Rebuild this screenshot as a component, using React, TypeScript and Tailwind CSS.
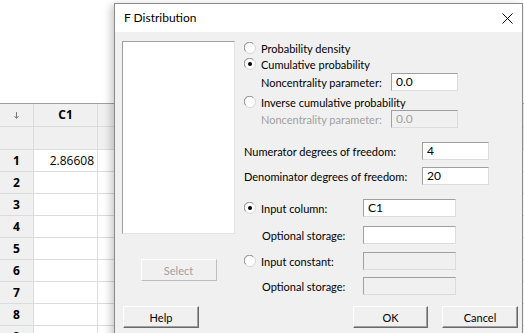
import React from 'react';

const ui = "font-['Lato',sans-serif] text-[11px] leading-none text-black whitespace-nowrap";

function Radio({ checked }: { checked?: boolean }) {
  return (
    <svg width="12" height="12" viewBox="0 0 12 12" className="shrink-0">
      <circle cx="6" cy="6" r="5.5" fill="#ffffff" stroke="#d4d4d4" />
      <path d="M1.7 9.2 A5.2 5.2 0 0 1 9.2 1.7" fill="none" stroke="#8c8c8c" />
      {checked && <circle cx="6" cy="6" r="2" fill="#000000" />}
    </svg>
  );
}

function Field({ value, disabled, className }: { value?: string; disabled?: boolean; className: string }) {
  return (
    <div
      className={`h-[18px] shrink-0 flex items-center px-[4px] text-[12px] border border-t-[#a0a0a0] border-l-[#a0a0a0] border-r-[#dcdcdc] border-b-[#dcdcdc] ${
        disabled ? 'bg-[#f0f0f0] text-[#a0a0a0]' : 'bg-white text-black'
      } ${className}`}
    >
      {value}
    </div>
  );
}

function Btn({ label, disabled, className }: { label: string; disabled?: boolean; className: string }) {
  return (
    <div
      className={`h-[22px] flex items-center justify-center bg-[#f0f0f0] border ${
        disabled
          ? 'border-t-white border-l-white border-r-[#bdbdbd] border-b-[#bdbdbd] text-[#a0a0a0]'
          : 'border-t-white border-l-white border-r-[#696969] border-b-[#696969] shadow-[inset_-1px_-1px_0_#a0a0a0] text-black'
      } ${className}`}
    >
      {label}
    </div>
  );
}

const rows = ['1', '2', '3', '4', '5', '6', '7', '8', '9'];

function Worksheet() {
  return (
    <div className="pt-[103px] font-['Open_Sans',sans-serif] text-[12px] text-black">
      <div className="border-t border-[#a0a0a0]">
        <div className="flex h-[23px] bg-[#f0f0f0] border-b border-[#dcdcdc]">
          <div className="w-[34px] border-r border-[#dcdcdc] flex items-center justify-center">
            <svg width="5" height="7" viewBox="0 0 5 7">
              <path d="M2.5 0 V6 M0.5 4 L2.5 6.5 L4.5 4" stroke="#7a7a7a" fill="none" strokeWidth="1" />
            </svg>
          </div>
          <div className="w-[64px] border-r border-[#dcdcdc] flex items-center justify-center font-bold">C1</div>
          <div className="flex-1" />
        </div>
        <div className="flex h-[23px] bg-[#f0f0f0] border-b border-[#dcdcdc]">
          <div className="w-[34px] border-r border-[#dcdcdc]" />
          <div className="w-[64px] border-r border-[#dcdcdc]" />
          <div className="flex-1" />
        </div>
        {rows.map((r) => (
          <div key={r} className="flex h-[22px] border-b border-[#dcdcdc]">
            <div className="w-[34px] bg-[#f0f0f0] border-r border-[#dcdcdc] flex items-center justify-center font-bold">
              {r}
            </div>
            <div className="w-[64px] border-r border-[#dcdcdc] flex items-center justify-end pr-[3px]">
              {r === '1' ? '2.86608' : ''}
            </div>
            <div className="flex-1 bg-white" />
          </div>
        ))}
      </div>
    </div>
  );
}

function Dialog() {
  return (
    <div className={`absolute left-[114px] top-[3px] w-[409px] h-[345px] border border-[#8a8a8a] bg-[#f0f0f0] shadow-[-3px_2px_8px_rgba(0,0,0,0.22)] flex flex-col ${ui}`}>
      {/* title bar */}
      <div className="h-[28px] bg-white flex items-center justify-between pl-[9px] pr-[9px]">
        <span className="text-[12px]">F Distribution</span>
        <svg width="11" height="11" viewBox="0 0 11 11">
          <path d="M0.5 0.5 L10.5 10.5 M10.5 0.5 L0.5 10.5" stroke="#000" strokeWidth="1" />
        </svg>
      </div>

      <div className="flex pt-[8px] pl-[7px]">
        {/* left column */}
        <div className="w-[113px] flex flex-col items-center">
          <div className="mt-[1px] w-[113px] h-[193px] bg-white border border-t-[#a0a0a0] border-l-[#a0a0a0] border-r-[#e3e3e3] border-b-[#e3e3e3]" />
          <Btn label="Select" disabled className="mt-[25px] w-[76px]" />
        </div>

        {/* right column */}
        <div className="ml-[9px] flex flex-col">
          <div className="h-[16px] flex items-center gap-[5px]">
            <Radio />
            <span>Probability density</span>
          </div>
          <div className="h-[16px] flex items-center gap-[5px]">
            <Radio checked />
            <span>Cumulative probability</span>
          </div>
          <div className="mt-[1px] h-[18px] flex items-center pl-[17px]">
            <span className="w-[130px] shrink-0">Noncentrality parameter:</span>
            <Field value="0.0" className="w-[67px]" />
          </div>
          <div className="mt-[3px] h-[16px] flex items-center gap-[5px]">
            <Radio />
            <span>Inverse cumulative probability</span>
          </div>
          <div className="h-[18px] flex items-center pl-[17px]">
            <span className="w-[130px] shrink-0 text-[#a0a0a0]">Noncentrality parameter:</span>
            <Field value="0.0" disabled className="w-[67px]" />
          </div>

          <div className="mt-[14px] h-[18px] flex items-center">
            <span className="w-[178px] shrink-0">Numerator degrees of freedom:</span>
            <Field value="4" className="w-[67px]" />
          </div>
          <div className="mt-[7px] h-[18px] flex items-center">
            <span className="w-[178px] shrink-0">Denominator degrees of freedom:</span>
            <Field value="20" className="w-[67px]" />
          </div>

          <div className="mt-[14px] h-[18px] flex items-center">
            <div className="w-[119px] shrink-0 flex items-center gap-[5px]">
              <Radio checked />
              <span>Input column:</span>
            </div>
            <Field value="C1" className="w-[93px]" />
          </div>
          <div className="mt-[9px] h-[18px] flex items-center">
            <span className="w-[119px] shrink-0 pl-[18px]">Optional storage:</span>
            <Field className="w-[93px]" />
          </div>
          <div className="mt-[8px] h-[18px] flex items-center">
            <div className="w-[119px] shrink-0 flex items-center gap-[5px]">
              <Radio />
              <span>Input constant:</span>
            </div>
            <Field disabled className="w-[93px]" />
          </div>
          <div className="mt-[7px] h-[18px] flex items-center">
            <span className="w-[119px] shrink-0 pl-[18px]">Optional storage:</span>
            <Field disabled className="w-[93px]" />
          </div>
        </div>
      </div>

      {/* bottom buttons */}
      <div className="mt-[11px] flex items-center pl-[8px] pr-[4px]">
        <Btn label="Help" className="w-[76px]" />
        <div className="flex-1" />
        <Btn label="OK" className="w-[75px]" />
        <Btn label="Cancel" className="ml-[14px] w-[76px]" />
      </div>
    </div>
  );
}

export default function App() {
  return (
    <div className="relative w-[524px] h-[333px] overflow-hidden bg-white">
      <Worksheet />
      <Dialog />
    </div>
  );
}
